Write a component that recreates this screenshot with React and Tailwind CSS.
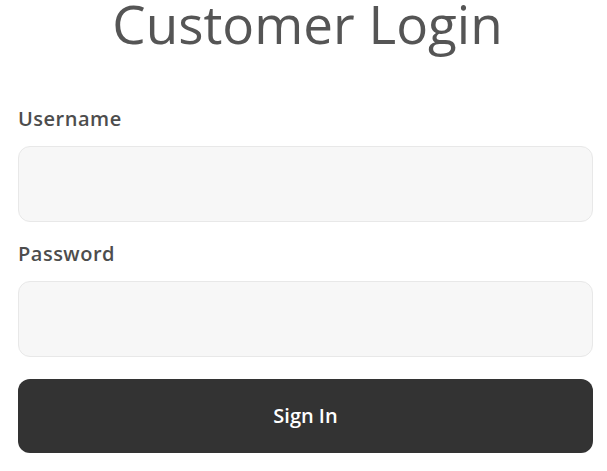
export default function App() {
  return (
    <div className="w-[607px] h-[471px] bg-white overflow-hidden pl-[18px] pr-[14px] font-['Open_Sans',sans-serif]">
      <h1 className="text-center text-[53px] leading-[47px] text-[#555555] font-normal pl-[4px]">
        Customer Login
      </h1>
      <form className="mt-[60px] flex flex-col">
        <label className="text-[20px] leading-[24px] font-semibold tracking-[0.5px] text-[#4d4d4d]">Username</label>
        <input
          type="text"
          className="mt-[15px] h-[76px] rounded-[12px] border border-[#e8e8e8] bg-[#f7f7f7] outline-none"
        />
        <label className="mt-[20px] text-[20px] leading-[24px] font-semibold tracking-[0.5px] text-[#4d4d4d]">Password</label>
        <input
          type="password"
          className="mt-[15px] h-[76px] rounded-[12px] border border-[#e8e8e8] bg-[#f7f7f7] outline-none"
        />
        <button
          type="button"
          className="mt-[22px] h-[74px] rounded-[12px] bg-[#333333] text-white text-[20px] font-semibold"
        >
          Sign In
        </button>
      </form>
    </div>
  )
}
